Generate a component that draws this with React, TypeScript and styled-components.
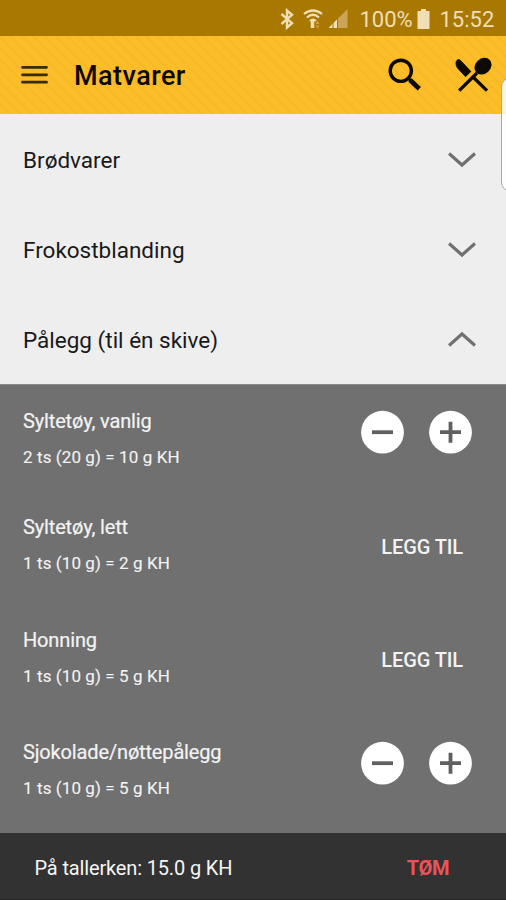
import React from 'react';
import styled, { createGlobalStyle } from 'styled-components';

const GlobalStyle = createGlobalStyle`
  * { box-sizing: border-box; }
  body { margin: 0; background: #707070; }
  button { border: 0; padding: 0; background: none; font: inherit; color: inherit; cursor: pointer; }
  svg { display: block; }
`;

const Screen = styled.div`
  position: relative;
  display: flex;
  flex-direction: column;
  width: 506px;
  height: 900px;
  overflow: hidden;
  background: #707070;
  font-family: Roboto, "Liberation Sans", sans-serif;
`;

const StatusBar = styled.div`
  display: flex;
  flex: none;
  justify-content: flex-end;
  align-items: center;
  height: 36px;
  padding: 3px 12px 0 0;
  background: #a87800;
  color: #f0dfb5;
`;

const StatusText = styled.span<{ $width: number; $size: number }>`
  width: ${(p) => p.$width}px;
  font-size: ${(p) => p.$size}px;
  line-height: 30px;
  white-space: nowrap;
`;

const StatusIcons = styled.svg`
  flex: none;
  margin: 0 12px 2px 0;
`;

const Battery = styled.svg`
  flex: none;
  margin: 0 10px 2px 5px;
`;

const AppBar = styled.header`
  display: flex;
  flex: none;
  align-items: center;
  height: 78px;
  padding: 0 14px 0 21px;
  background: repeating-linear-gradient(45deg, #fbbd28 0 5px, #f6b724 6.5px, #fbbd28 8px);
  color: #0d0a03;
`;

const MenuButton = styled.button`
  margin-right: 26px;
`;

const Title = styled.h1`
  flex: 1;
  margin: 2px 0 0;
  font-size: 27px;
  font-weight: 500;
  line-height: 36px;
  letter-spacing: 0.45px;
`;

const SearchButton = styled.button`
  margin-right: 32px;
`;

const Group = styled.button`
  display: flex;
  flex: none;
  justify-content: space-between;
  align-items: center;
  height: 90px;
  padding: 2px 30px 0 23px;
  background: #eeeeee;
  color: #191919;
  text-align: left;
`;

const GroupName = styled.span`
  font-size: 22.5px;
  line-height: 30px;
  letter-spacing: 0;
`;

const FoodList = styled.ul`
  flex: 1;
  margin: 0;
  padding: 0;
  list-style: none;
  border-top: 1px solid #898989;
  background: #707070;
  color: #f3f3f3;
`;

const FoodRow = styled.li<{ $height: number }>`
  display: flex;
  justify-content: space-between;
  height: ${(p) => p.$height}px;
  padding: 21px 33px 0 23px;
`;

const FoodName = styled.div`
  font-size: 20px;
  line-height: 30px;
  letter-spacing: -0.15px;
  -webkit-text-stroke: 0.2px currentColor;
`;

const Portion = styled.div`
  margin-top: 6px;
  font-size: 17px;
  line-height: 30px;
  letter-spacing: 0.1px;
  -webkit-text-stroke: 0.12px currentColor;
`;

const Stepper = styled.div`
  display: flex;
  gap: 23px;
  height: 45px;
  margin-top: 4px;
`;

const AddButton = styled.button`
  height: 30px;
  margin: 20px 10px 0 0;
  font-size: 20px;
  font-weight: 500;
  line-height: 30px;
  letter-spacing: -0.1px;
`;

const Footer = styled.footer`
  display: flex;
  flex: none;
  justify-content: space-between;
  align-items: center;
  height: 67px;
  padding: 3px 57px 0 34.5px;
  background: #323232;
  color: #f5f5f5;
  font-size: 20px;
  letter-spacing: -0.15px;
  border-bottom: 1px solid #272727;
`;

const ClearButton = styled.button`
  color: #ea5459;
  font-weight: 700;
  letter-spacing: -0.4px;
`;

const EdgeHandle = styled.div`
  position: absolute;
  top: 77px;
  left: 501px;
  width: 20px;
  height: 115px;
  border: 1px solid #a9a9a9;
  border-radius: 10px;
  background: linear-gradient(#fff4d9 0 36px, #fdfdfd 37px);
`;

function Chevron({ up = false }: { up?: boolean }) {
  return (
    <svg width="28" height="18" viewBox="0 0 28 18" fill="none" stroke="#707070" strokeWidth="3.2">
      <path d={up ? 'M1 14.5 14 3l13 11.5' : 'M1 2.5 14 14 27 2.5'} />
    </svg>
  );
}

function RoundIcon({ plus = false }: { plus?: boolean }) {
  return (
    <svg width="45" height="45" viewBox="0 0 45 45">
      <circle cx="22.5" cy="22.2" r="21.4" fill="#fff" />
      <path d={plus ? 'M12 22.2h21M22.5 11.7v21' : 'M12 22.2h21'} stroke="#606060" strokeWidth="3.8" />
    </svg>
  );
}

const groups = [
  { name: 'Brødvarer', open: false },
  { name: 'Frokostblanding', open: false },
  { name: 'Pålegg (til én skive)', open: true },
];

const foods = [
  { name: 'Syltetøy, vanlig', portion: '2 ts (20 g) = 10 g KH', added: true, height: 106 },
  { name: 'Syltetøy, lett', portion: '1 ts (10 g) = 2 g KH', added: false, height: 112.5 },
  { name: 'Honning', portion: '1 ts (10 g) = 5 g KH', added: false, height: 112.5 },
  { name: 'Sjokolade/nøttepålegg', portion: '1 ts (10 g) = 5 g KH', added: true, height: 112 },
];

export default function App() {
  return (
    <Screen>
      <GlobalStyle />
      <StatusBar>
        <StatusIcons width="69" height="22" viewBox="0 0 69 22" fill="none" stroke="#f0dfb5">
          <path d="M2.5 6 13 15.2 8 19.5V2.5l5 4.3L2.5 16" strokeWidth="2.4" />
          <path d="M25 6q9-7 18 0M28 9.5q6-5.5 12 0M31 13q3-3 6 0" strokeWidth="2.2" />
          <path d="M33.5 12v8" strokeWidth="3.5" />
          <path d="m36.5 16 2-3 2 3zM36.5 17.5h4l-2 3z" fill="#d99b51" stroke="none" />
          <path d="M49.5 20 68.5 1v19z" fill="#cda456" stroke="none" />
          <path d="M49.5 20l8.5-8.5v8.5z" fill="#f0dfb5" stroke="none" />
          <path d="M54 14v7M58.5 9v12" stroke="#a87800" strokeWidth="1" />
        </StatusIcons>
        <StatusText $width={52} $size={22}>100%</StatusText>
        <Battery width="13" height="20" viewBox="0 0 13 20" fill="#f0dfb5">
          <path d="M4 0h5v2h3.5v18H.5V2H4z" />
        </Battery>
        <StatusText $width={54.5} $size={22}>15:52</StatusText>
      </StatusBar>
      <AppBar>
        <MenuButton aria-label="Meny">
          <svg width="27" height="20" viewBox="0 0 27 20" stroke="#3a2b08" strokeWidth="2.8" strokeLinecap="round">
            <path d="M1.5 2.3h24M1.5 9.8h24M1.5 17.2h24" />
          </svg>
        </MenuButton>
        <Title>Matvarer</Title>
        <SearchButton aria-label="Søk">
          <svg width="34" height="34" viewBox="0 0 34 34" fill="none" stroke="currentColor">
            <circle cx="12.8" cy="12.8" r="10.6" strokeWidth="3.4" />
            <path d="m20.5 20.5 3 3" strokeWidth="3" />
            <path d="m22 22 9.3 8.8" strokeWidth="4.8" />
          </svg>
        </SearchButton>
        <button aria-label="Tallerken">
          <svg width="38" height="36" viewBox="0 0 38 36" fill="none" stroke="currentColor">
            <path d="M5.2 33.6 23 16M19 20l14 13.6" strokeWidth="3.3" />
            <path
              d="M5 2.5C2.9 2.4 2 4.2 2 6.3c0 2.6 1 4.4 2.6 6l6.9 7.4 5.4-5.2L6.9 3.8Z"
              fill="currentColor"
              stroke="currentColor"
              strokeWidth="0.8"
              strokeLinejoin="round"
            />
            <ellipse cx="29" cy="9.2" rx="9.2" ry="7.6" transform="rotate(-43 29 9.2)" fill="currentColor" stroke="none" />
          </svg>
        </button>
      </AppBar>
      {groups.map((g) => (
        <Group key={g.name} aria-expanded={g.open}>
          <GroupName>{g.name}</GroupName>
          <Chevron up={g.open} />
        </Group>
      ))}
      <FoodList>
        {foods.map((f) => (
          <FoodRow key={f.name} $height={f.height}>
            <div>
              <FoodName>{f.name}</FoodName>
              <Portion>{f.portion}</Portion>
            </div>
            {f.added ? (
              <Stepper>
                <button aria-label="Færre"><RoundIcon /></button>
                <button aria-label="Flere"><RoundIcon plus /></button>
              </Stepper>
            ) : (
              <AddButton>LEGG TIL</AddButton>
            )}
          </FoodRow>
        ))}
      </FoodList>
      <Footer>
        <span>På tallerken: 15.0 g KH</span>
        <ClearButton>TØM</ClearButton>
      </Footer>
      <EdgeHandle />
    </Screen>
  );
}
